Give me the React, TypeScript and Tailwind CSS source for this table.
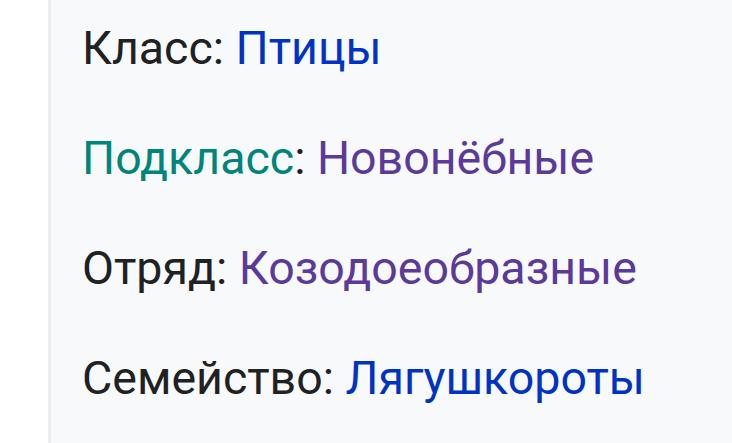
export default function App() {
  const rows: { label: string; labelColor: string; value: string; valueColor: string }[] = [
    { label: "Класс", labelColor: "text-[#202122]", value: "Птицы", valueColor: "text-[#0033c4]" },
    { label: "Подкласс", labelColor: "text-[#00857a]", value: "Новонёбные", valueColor: "text-[#5b3a9a]" },
    { label: "Отряд", labelColor: "text-[#202122]", value: "Козодоеобразные", valueColor: "text-[#5b3a9a]" },
    { label: "Семейство", labelColor: "text-[#202122]", value: "Лягушкороты", valueColor: "text-[#0033c4]" },
  ];
  return (
    <div className="w-[732px] h-[443px] overflow-hidden bg-white flex" style={{ fontFamily: "Roboto, sans-serif" }}>
      <div className="w-[48px] shrink-0 bg-white" />
      <div className="flex-1 bg-[#f8f9fa] border-l-[3px] border-[#eaecf0] pl-[31px] pt-[20px] flex flex-col gap-[54px]">
        {rows.map((r) => (
          <div key={r.label} className="text-[46.5px] leading-[56px] whitespace-nowrap text-[#202122]">
            <span className={r.labelColor}>{r.label}</span>
            <span>: </span>
            <span className={r.valueColor}>{r.value}</span>
          </div>
        ))}
      </div>
    </div>
  );
}
